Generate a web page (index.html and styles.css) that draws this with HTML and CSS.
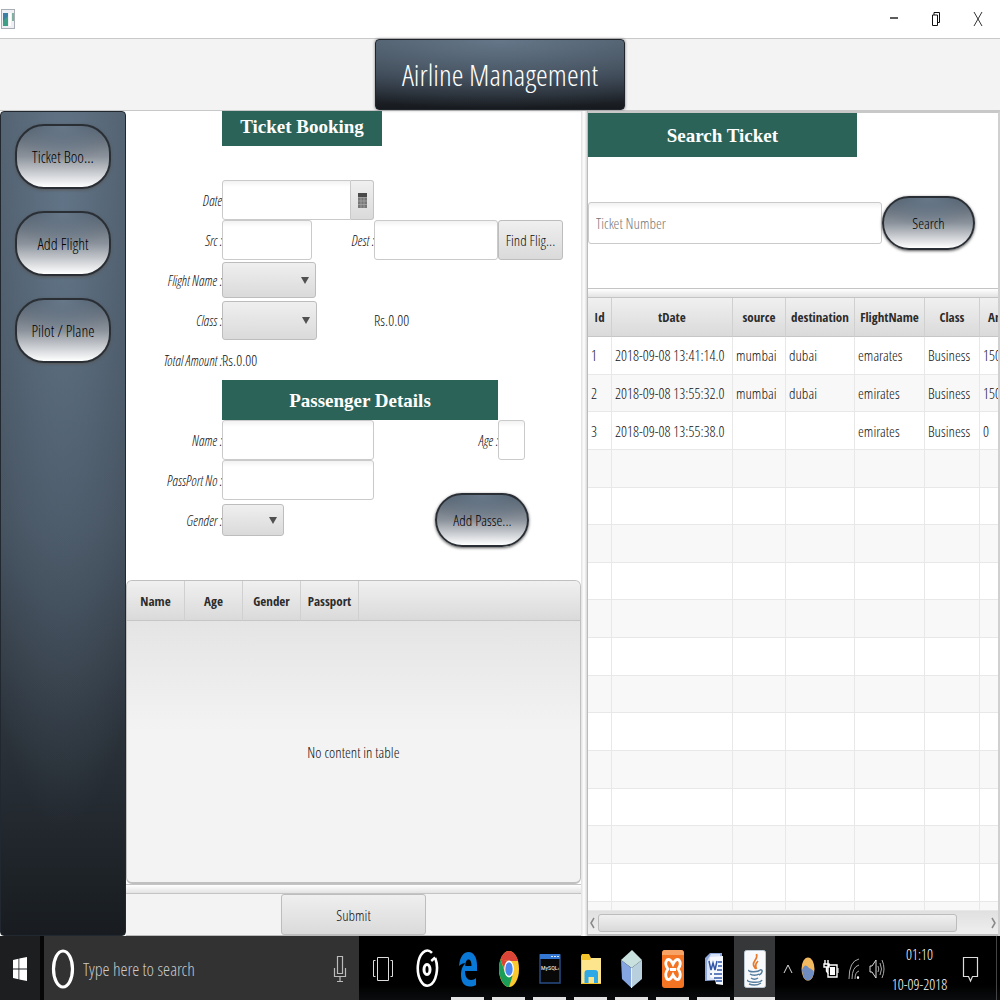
FILE: index.html
```html
<!DOCTYPE html>
<html lang="en">
<head>
<meta charset="utf-8">
<title>Airline Management</title>
<link rel="stylesheet" href="styles.css">
</head>
<body>
<header class="titlebar">
  <svg class="app-icon" width="14" height="20" viewBox="0 0 14 20"><rect x=".5" y=".5" width="13" height="19" fill="#eef0f4" stroke="#a9adb5"/><rect x="2" y="4" width="5" height="13" fill="#3f9f86"/><path d="M2 4h5v3l-5 5z" fill="#3b7fa5"/><rect x="8" y="4" width="2" height="13" fill="#fff"/><rect x="11" y="4" width="2" height="8" fill="#7fb0a0"/></svg>
  <div class="window-buttons">
    <button type="button" aria-label="Minimize"><svg width="14" height="16" viewBox="0 0 14 16"><path d="M3 7h8" stroke="#333" stroke-width="1.6"/></svg></button>
    <button type="button" aria-label="Restore"><svg width="14" height="16" viewBox="0 0 14 16"><path d="M5 4V1.500h5.500v10H9M3.500 4h5v10.500h-5z" fill="none" stroke="#111"/></svg></button>
    <button type="button" aria-label="Close"><svg width="14" height="16" viewBox="0 0 14 16"><path d="M3 1l8 14M11 1L3 15" stroke="#333"/></svg></button>
  </div>
</header>
<div class="banner"><h1>Airline Management</h1></div>
<main class="workspace">
  <nav class="sidebar">
    <button type="button" class="pill">Ticket Boo...</button>
    <button type="button" class="pill">Add Flight</button>
    <button type="button" class="pill">Pilot / Plane</button>
  </nav>
  <section class="booking">
    <form class="booking-form">
      <h2 class="heading heading-booking">Ticket Booking</h2>
      <label for="date" class="row-start">Date</label>
      <div class="date-picker"><input id="date" type="text"><button type="button" aria-label="Open calendar"><svg width="9" height="15" viewBox="0 0 9 15"><path d="M0 0h9v15H0z" fill="#777"/><path d="M0 0h9v4H0z" fill="#4a4a4a"/><path d="M0 4.500h9M0 8h9M0 11.500h9M3 4v11M6 4v11" stroke="#aaa" stroke-width=".7"/></svg></button></div>
      <label for="src" class="row-start">Src :</label>
      <div class="src-cell"><input id="src" type="text"><label for="dest">Dest :</label></div>
      <input id="dest" type="text">
      <button type="button" class="plain find">Find Flig...</button>
      <label for="flight" class="row-start">Flight Name :</label>
      <select id="flight" class="select-flight"><option></option></select>
      <label for="class" class="row-start">Class :</label>
      <select id="class" class="select-class"><option></option></select>
      <output class="amount">Rs.0.00</output>
      <span class="label row-start">Total Amount :</span>
      <output class="amount">Rs.0.00</output>
      <h2 class="heading heading-passenger">Passenger Details</h2>
      <label for="name" class="row-start">Name :</label>
      <input id="name" type="text">
      <label for="age">Age :</label>
      <input id="age" class="age" type="text">
      <label for="passport" class="row-start">PassPort No :</label>
      <input id="passport" type="text">
      <label for="gender" class="row-start">Gender :</label>
      <select id="gender" class="select-gender"><option></option></select>
      <button type="button" class="pill add-passenger">Add Passe...</button>
    </form>
    <div class="passengers">
      <table>
        <thead><tr><th>Name</th><th>Age</th><th>Gender</th><th>Passport</th><th class="rest"></th></tr></thead>
        <tbody><tr><td colspan="5">No content in table</td></tr></tbody>
      </table>
    </div>
    <div class="divider-h"></div>
    <div class="submit-bar"><button type="button" class="plain submit">Submit</button></div>
  </section>
  <div class="divider-v"></div>
  <section class="search">
    <form class="search-form">
      <h2 class="heading heading-search">Search Ticket</h2>
      <div class="search-row"><input type="text" placeholder="Ticket Number" aria-label="Ticket Number"><button type="button" class="pill">Search</button></div>
    </form>
    <div class="divider-h"></div>
    <div class="tickets">
      <table>
        <colgroup><col class="c-id"><col class="c-date"><col class="c-source"><col class="c-dest"><col class="c-flight"><col class="c-class"><col class="c-amount"></colgroup>
        <thead><tr><th>Id</th><th>tDate</th><th>source</th><th>destination</th><th>FlightName</th><th>Class</th><th>Amount</th></tr></thead>
        <tbody>
          <tr><td>1</td><td>2018-09-08 13:41:14.0</td><td>mumbai</td><td>dubai</td><td>emarates</td><td>Business</td><td>1500</td></tr>
          <tr><td>2</td><td>2018-09-08 13:55:32.0</td><td>mumbai</td><td>dubai</td><td>emirates</td><td>Business</td><td>1500</td></tr>
          <tr><td>3</td><td>2018-09-08 13:55:38.0</td><td></td><td></td><td>emirates</td><td>Business</td><td>0</td></tr>
          <tr><td></td><td></td><td></td><td></td><td></td><td></td><td></td></tr>
          <tr><td></td><td></td><td></td><td></td><td></td><td></td><td></td></tr>
          <tr><td></td><td></td><td></td><td></td><td></td><td></td><td></td></tr>
          <tr><td></td><td></td><td></td><td></td><td></td><td></td><td></td></tr>
          <tr><td></td><td></td><td></td><td></td><td></td><td></td><td></td></tr>
          <tr><td></td><td></td><td></td><td></td><td></td><td></td><td></td></tr>
          <tr><td></td><td></td><td></td><td></td><td></td><td></td><td></td></tr>
          <tr><td></td><td></td><td></td><td></td><td></td><td></td><td></td></tr>
          <tr><td></td><td></td><td></td><td></td><td></td><td></td><td></td></tr>
          <tr><td></td><td></td><td></td><td></td><td></td><td></td><td></td></tr>
          <tr><td></td><td></td><td></td><td></td><td></td><td></td><td></td></tr>
          <tr><td></td><td></td><td></td><td></td><td></td><td></td><td></td></tr>
          <tr class="cut"><td></td><td></td><td></td><td></td><td></td><td></td><td></td></tr>
        </tbody>
      </table>
    </div>
    <div class="scrollbar">
      <svg width="6" height="12" viewBox="0 0 6 12"><path d="M5 1L2 6l3 5" fill="none" stroke="#888" stroke-width="1.500"/></svg>
      <div class="track"><div class="thumb"></div></div>
      <svg width="6" height="12" viewBox="0 0 6 12"><path d="M1 1l3 5-3 5" fill="none" stroke="#888" stroke-width="1.500"/></svg>
    </div>
  </section>
</main>
<footer class="taskbar">
  <button type="button" class="start" aria-label="Start"><svg width="14" height="24" viewBox="0 0 14 24"><path d="M0 3l5.500-1.300v9.800H0zM6.300 1.500L14 0v11.500H6.300zM0 12.500h5.500v9.800L0 21zM6.300 12.500H14V24l-7.700-1.500z" fill="#fff"/></svg></button>
  <div class="task-search">
    <svg width="24" height="42" viewBox="0 0 24 42"><ellipse cx="12" cy="21" rx="9.500" ry="18" fill="none" stroke="#fff" stroke-width="3.200"/></svg>
    <input type="text" placeholder="Type here to search" aria-label="Type here to search">
    <svg width="14" height="28" viewBox="0 0 14 28"><path d="M4.500 1.500h5v17h-5zM1.500 13v8.500h11V13M7 22v4M4 26.500h6" fill="none" stroke="#bbb" stroke-width="1.200"/></svg>
  </div>
  <div class="apps">
    <button type="button" class="task-view" aria-label="Task view"><svg width="22" height="40" viewBox="0 0 22 40"><path d="M5.500 8.500h11v23h-11zM3.500 11.500h-2v16h2M18.500 11.500h2v16h-2" fill="none" stroke="#ddd"/></svg></button>
    <button type="button" aria-label="Music"><svg width="24" height="40" viewBox="0 0 24 40"><path d="M17 3.800A9.600 17.500 0 1 0 20.200 9" fill="none" stroke="#fff" stroke-width="2.600"/><path d="M20.200 8.500l-4 3.500" stroke="#fff" stroke-width="2.400"/><ellipse cx="12" cy="20.500" rx="3" ry="5" fill="none" stroke="#fff" stroke-width="3"/></svg></button>
    <button type="button" class="open" aria-label="Edge"><svg width="20" height="36" viewBox="0 0 20 36"><path d="M1 15C2 5 6 1 10.500 1 16 1 19 7 19 14v6H7c0 6 2.500 9 6 9 2 0 4-1 5-2v7c-2 1.300-4 1.500-6 1.500C6 35.500 3 31 3 24c0-6 2-10 5-12-3 0-5 1-7 3zm6.200 0h6.300c0-4-1-6.500-3-6.500S7.500 11 7.200 15z" fill="#0a78d6"/></svg></button>
    <button type="button" class="open" aria-label="Chrome"><svg width="20" height="36" viewBox="0 0 20 36"><ellipse cx="10" cy="18" rx="10" ry="18" fill="#fbc92f"/><path d="M1.500 8.500C3.500 3 6.500 0 10 0c4 0 7.200 4 9 10H10z" fill="#dc4437"/><path d="M1.500 8.500C-.5 14-.5 22 2 28c1.800 5 5 8 8 8l3.500-11L5.500 20z" fill="#1a9d58"/><path d="M1.500 8.500L6 20l4-10z" fill="#dc4437"/><ellipse cx="10" cy="18" rx="4.800" ry="8.500" fill="#fff"/><ellipse cx="10" cy="18" rx="3.700" ry="6.800" fill="#4a86ee"/></svg></button>
    <button type="button" class="open" aria-label="MySQL"><svg width="22" height="32" viewBox="0 0 22 32"><path d="M1 2h20v28H1z" fill="#080808" stroke="#274b82" stroke-width="1.500"/><path d="M1 1h20v5H1z" fill="#3477d2"/><path d="M12 3.500h2m1 0h2m1 0h2" stroke="#d8e8ff"/><text x="2" y="17" class="mysql">MySQL›</text></svg></button>
    <button type="button" class="open" aria-label="File Explorer"><svg width="20" height="30" viewBox="0 0 20 30"><path d="M0 2l1-2h7l2 4h10v26H0z" fill="#f3c32c"/><path d="M1 6l8 0 1.500-2H20v25H1z" fill="#fde58e"/><path d="M3.500 29V19q0-3 3-3h7.500q3 0 3 3v10h-4v-6H7.500v6z" fill="#2fa8e6"/></svg></button>
    <button type="button" class="open" aria-label="NetBeans"><svg width="22" height="38" viewBox="0 0 22 38"><path d="M0 10L11 0l10 10-10.500 8z" fill="#c8e1df"/><path d="M0 10l10.500 8V38L1 29z" fill="#84a5e0"/><path d="M21 10l-10.500 8V38L21 29z" fill="#b8d0de"/><path d="M10.500 18v20" stroke="#e6f2fb"/></svg></button>
    <button type="button" class="open" aria-label="XAMPP"><svg width="22" height="38" viewBox="0 0 22 38"><rect width="22" height="38" rx="3" fill="#f37523"/><path d="M0 4q0-4 3-4h16q3 0 3 4v1H0z" fill="#f6a365"/><path d="M5 10q3-2 6 4 3-6 6-4 3 4-1 9 4 5 1 10-3 2-6-4-3 6-6 4-3-5 1-10-4-5-1-9z" fill="none" stroke="#fff" stroke-width="2.800"/><path d="M8 19.500h6" stroke="#fff" stroke-width="3"/></svg></button>
    <button type="button" class="open" aria-label="Word"><svg width="20" height="34" viewBox="0 0 20 34"><path d="M1 6l5-5h12v27L1 29z" fill="#8fa8dc"/><path d="M3 9l4-7h9v26H3z" fill="#d7e1f5"/><path d="M6 5l13-1v29l-7-1-1-5-5-2z" fill="#f5f8fd"/><path d="M5 9l2 9 2-7 2 7 2-9M14 10h4M14 14h4M13 18h5M6 22h2m2 0h8M10 26h8M12 29h6" fill="none" stroke="#3257a8" stroke-width="1.500"/></svg></button>
    <button type="button" class="open active" aria-label="Java"><svg width="22" height="38" viewBox="0 0 22 38"><rect x=".5" y=".5" width="21" height="37" rx="2" fill="#f7f9fb" stroke="#b9c6d2"/><path d="M12.500 4c2 5-4 7-3 11 .5 2 2 2.500 2 4M14 11c-3 3-3 5-1.500 8" fill="none" stroke="#e8792c" stroke-width="1.700"/><path d="M5 20c-2 2 9 2.500 11 0M6 24c2 1.500 7 1.500 9 0M7 28c2 1.500 5 1.500 7 0M16 20c3-1 3 3-1 5M4 30c-3 2 12 4 14 0M5 34c4 1.500 9 1 12-1" fill="none" stroke="#567d9d" stroke-width="1.500"/></svg></button>
  </div>
  <div class="tray">
    <svg width="10" height="12" viewBox="0 0 10 12"><path d="M1 10l4-8 4 8" fill="none" stroke="#ddd"/></svg>
    <svg width="14" height="24" viewBox="0 0 14 24"><ellipse cx="7" cy="12" rx="6.500" ry="11.500" fill="#f3b95f"/><path d="M1 13q3-8 7-2 5 2 5 5-2 7-6 7.500Q2 23 1 13z" fill="#6f8cc0"/></svg>
    <svg width="16" height="22" viewBox="0 0 16 22"><path d="M5 7h9v12H5zM2 2v4M5 2v4M1 6h5v3H1zM3.500 9v4l2 3" fill="none" stroke="#fff" stroke-width="1.400"/><path d="M7 9h5v8H7zM14.500 10h1v5h-1z" fill="#fff"/></svg>
    <svg width="14" height="24" viewBox="0 0 14 24"><path d="M2 22Q2 4 12 2M5 22Q5 10 12 8M8 22Q8 15 12 14" fill="none" stroke="#aaa"/><ellipse cx="11" cy="20.500" rx="1.100" ry="1.600" fill="#fff"/></svg>
    <svg width="16" height="22" viewBox="0 0 16 22"><path d="M1 8h2l4-6v18l-4-6H1z" fill="none" stroke="#ddd"/><path d="M9 8q1.500 3 0 6M11 5q3 6 0 12M13 2q4 9 0 18" fill="none" stroke="#aaa"/></svg>
  </div>
  <div class="clock"><span>01:10</span><span>10-09-2018</span></div>
  <button type="button" class="notices" aria-label="Notifications"><svg width="18" height="28" viewBox="0 0 18 28"><path d="M1.500 2.500h14v19h-5L8.500 26l-2-4.500h-5z" fill="none" stroke="#ddd" stroke-width="1.200"/></svg></button>
</footer>
</body>
</html>
```

FILE: styles.css
```css
* { box-sizing: border-box; }

body {
  margin: 0;
  min-height: 100vh;
  display: flex;
  flex-direction: column;
  background: #fff;
  color: #111;
  font-family: "Open Sans Condensed Light", "Roboto Condensed", sans-serif;
  font-size: 15px;
}

button, input, select { font: inherit; color: inherit; margin: 0; }
button { padding: 0; border: 0; background: none; white-space: nowrap; }
h1, h2 { margin: 0; }
svg { display: block; flex: none; }

.titlebar {
  height: 38px;
  display: flex;
  align-items: center;
  justify-content: space-between;
  padding: 0 1px;
}
.window-buttons { display: flex; }
.window-buttons button { width: 42px; display: grid; place-items: center; }

.banner {
  height: 73px;
  display: flex;
  justify-content: center;
  background: #f3f3f3;
  border-top: 1px solid #c9c9c9;
  border-bottom: 1px solid #c8c8c8;
}
.banner h1 {
  width: 25%;
  display: grid;
  place-items: center;
  border: 1px solid #20252b;
  border-radius: 4px;
  background: radial-gradient(ellipse 110% 100% at 50% 0, rgba(110, 130, 150, .75), transparent), linear-gradient(#46525e, #303944 55%, #16191d);
  box-shadow: 0 0 3px #777;
  color: #fff;
  font-size: 30px;
  font-weight: 400;
  line-height: 1;
  white-space: nowrap;
}

.workspace { flex: 1; display: flex; }

.sidebar {
  width: 126px;
  display: flex;
  flex-direction: column;
  gap: 22px;
  padding: 12px 14px;
  border: 1px solid #22282f;
  border-radius: 4px;
  background: radial-gradient(ellipse 90% 75% at 50% 12%, rgba(105, 127, 148, .75), transparent), linear-gradient(#4b5763, #3e4955 50%, #181c20);
}

.pill {
  border: 2px solid #2a2f35;
  border-radius: 29px;
  background: radial-gradient(ellipse 60% 60% at 50% 0, #67788a, transparent), linear-gradient(#4d5965, #8b929b 50%, #fff);
  box-shadow: 0 1px 3px #555;
  color: #000;
}
.sidebar .pill { height: 65px; font-size: 16px; }

.booking { flex: 456; min-width: 0; display: flex; flex-direction: column; }
.booking-form {
  height: 469px;
  display: grid;
  grid-template-columns: 96px 152px 124px 1fr;
  grid-template-rows: 69px;
  grid-auto-rows: 40px;
  align-items: center;
}
.booking-form label, .label { justify-self: end; font-size: 14px; font-style: italic; }
.row-start { grid-column: 1; }

.heading {
  display: grid;
  place-items: center;
  background: #2c6358;
  color: #fff;
  font-family: "Liberation Serif", serif;
  font-size: 19px;
  font-weight: 700;
  line-height: 1;
}
.heading-booking { grid-column: 2 / 4; width: 160px; height: 35px; padding-bottom: 4px; align-self: start; }
.heading-passenger { grid-column: 2 / 4; height: 40px; }
.heading-search { width: 269px; height: 44px; }

input[type="text"] {
  width: 100%;
  height: 40px;
  padding: 0 7px;
  border: 1px solid #cacaca;
  border-radius: 3px;
  background: linear-gradient(#f2f2f2, #fff 6px);
}
input::placeholder { color: #777; opacity: 1; }
.date-picker, .src-cell, .search-row { display: flex; align-items: center; }
.date-picker input[type="text"] { border-radius: 3px 0 0 3px; }
.date-picker button { flex: none; width: 23px; height: 40px; display: grid; place-items: center; border: 1px solid #c4c4c4; border-left: 0; border-radius: 0 3px 3px 0; background: linear-gradient(#f0f0f0, #dadada); }
.src-cell { justify-content: space-between; }
.src-cell input[type="text"] { width: 90px; }
.booking-form input.age { width: 27px; }

select, .plain {
  border: 1px solid #bdbdbd;
  border-radius: 3px;
  background: linear-gradient(#efefef, #dadada);
}
select {
  appearance: none;
  height: 36px;
  background: url("data:image/svg+xml,%3Csvg xmlns='http://www.w3.org/2000/svg' width='8' height='7'%3E%3Cpath d='M0 0h8L4 7z' fill='%23505050'/%3E%3C/svg%3E") no-repeat right 6px center, linear-gradient(#efefef, #dadada);
}
.select-flight { width: 94px; }
.select-class { width: 95px; height: 39px; }
.select-gender { width: 62px; height: 32px; }
.find { width: 65px; height: 40px; }
.add-passenger { grid-column: 3 / 5; justify-self: center; width: 94px; height: 54px; margin-left: 10px; }

.passengers {
  flex: 1;
  display: flex;
  border: 1px solid #c0c0c0;
  border-width: 1px 1px 2px;
  border-radius: 6px;
  background: linear-gradient(#dfdfdf, #f3f3f3 150px);
  overflow: hidden;
}
table { border-collapse: separate; border-spacing: 0; table-layout: fixed; }
th {
  padding: 0;
  border-right: 1px solid #d0d0d0;
  border-bottom: 1px solid #c6c6c6;
  background: linear-gradient(#f0f0f0, #dadada);
  color: #2c2c2c;
  font-family: "Open Sans Condensed", sans-serif;
  font-size: 13px;
}
.passengers table { width: 100%; height: 100%; }
.passengers th { width: 58px; height: 40px; }
.passengers th.rest { width: auto; border-right: 0; }
.passengers td { text-align: center; }

.divider-h { height: 10px; background: linear-gradient(#fff, #e3e3e3); border: solid #c4c4c4; border-width: 1px 0; }
.divider-v { width: 7px; background: linear-gradient(90deg, #e0e0e0, #fff, #d8d8d8); border-right: 1px solid #bbb; }
.submit-bar { height: 42px; display: flex; justify-content: center; background: #f3f3f3; border-bottom: 1px solid #bbb; }
.submit { width: 145px; }

.search { flex: 411; min-width: 0; display: flex; flex-direction: column; border-right: 2px solid #d0d0d0; border-top: 2px solid #c8c8c8; }
.search-form { height: 175px; display: flex; flex-direction: column; gap: 39px; }
.search-row input[type="text"] { flex: 1; height: 42px; }
.search-row .pill { width: 93px; height: 54px; margin-right: 23px; }

.tickets { flex: 1; overflow: hidden; }
.tickets table { width: 450px; height: 613px; }
.tickets th { height: 39px; }
.tickets td { padding: 0 3px; border-right: 1px solid #e8e8e8; border-bottom: 1px solid #e8e8e8; white-space: nowrap; }
.tickets tbody tr { height: 37px; }
.tickets tr:nth-child(even) td { background: #f8f8f8; }
.tickets tbody tr.cut { height: 9px; }
.c-id { width: 24px; }
.c-date { width: 121px; }
.c-source { width: 53px; }
.c-dest { width: 69px; }
.c-flight { width: 70px; }
.c-class { width: 55px; }
.c-amount { width: 58px; }

.scrollbar {
  height: 25px;
  display: flex;
  align-items: center;
  gap: 3px;
  padding: 0 1px;
  background: linear-gradient(#e0e0e0, #efefef);
  border-bottom: 2px solid #bbb;
}
.track { flex: 1; }
.thumb { width: 92%; height: 18px; border: 1px solid #bcbcbc; border-radius: 3px; background: linear-gradient(#f0f0f0, #d9d9d9); }

.taskbar { height: 65px; display: flex; background: linear-gradient(#000 75%, #0b0d0f); color: #fff; }
.start { width: 44px; display: grid; place-items: center; background: #1d1e20; border-right: 4px solid #060606; }
.task-search { flex: 1; display: flex; align-items: center; padding: 0 12px 0 7px; gap: 8px; background: #323232; }
.taskbar input[type="text"] { flex: 1; min-width: 0; padding: 0; border: 0; background: none; font-size: 18px; }
.taskbar input::placeholder { color: #c8c8c8; }
.apps { display: flex; }
.apps button { width: 41px; display: grid; place-items: center; }
.apps .task-view { width: 47px; }
.apps .open { background: linear-gradient(#e4e4e4, #e4e4e4) no-repeat center bottom / 33px 4px; }
.apps .active { background: linear-gradient(#e4e4e4, #e4e4e4) no-repeat center bottom / 41px 4px, #353739; }
.mysql { fill: #fff; font-family: "Roboto Condensed", sans-serif; font-size: 6px; }
.tray { display: flex; align-items: center; gap: 8px; padding: 0 0 0 8px; }
.clock { width: 69px; display: flex; flex-direction: column; align-items: center; justify-content: center; gap: 14px; font-size: 15px; line-height: 16px; white-space: nowrap; }
.notices { width: 43px; display: grid; place-items: center; padding-right: 8px; border-right: 1px solid #444; margin-right: 3px; }
```
